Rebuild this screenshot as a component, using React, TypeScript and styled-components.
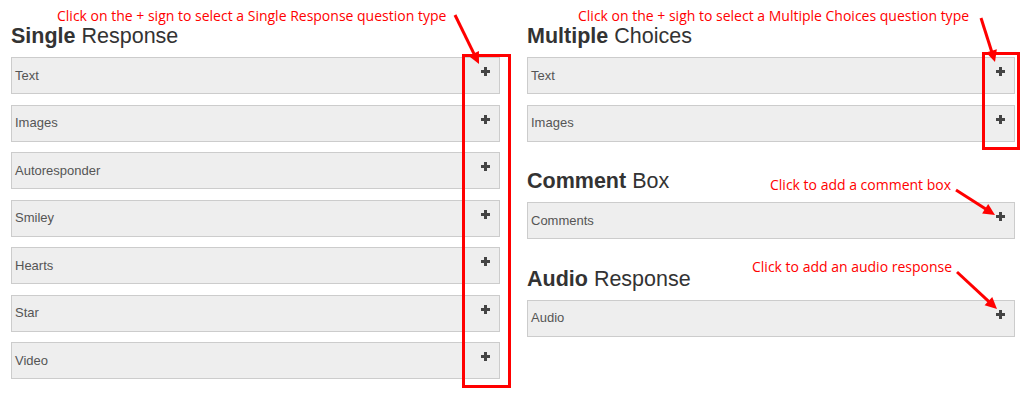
import styled, { createGlobalStyle } from 'styled-components';

const GlobalStyle = createGlobalStyle`
  html, body {
    margin: 0;
    padding: 0;
    background: #fff;
  }
`;

const Page = styled.div`
  position: relative;
  width: 1027px;
  height: 395px;
  overflow: hidden;
  display: grid;
  grid-template-columns: 489px 488px;
  column-gap: 27px;
  padding: 24px 0 0 11px;
  box-sizing: border-box;
  font-family: 'Liberation Sans', Arial, sans-serif;
`;

const Column = styled.div`
  display: flex;
  flex-direction: column;
  gap: 27.5px;
`;

const Section = styled.section`
  display: flex;
  flex-direction: column;
`;

const Heading = styled.h2`
  margin: 0 0 9px;
  font-size: 21.5px;
  line-height: 24px;
  font-weight: 400;
  color: #333;

  b {
    font-weight: 700;
  }
`;

const List = styled.ul`
  list-style: none;
  margin: 0;
  padding: 0;
  display: flex;
  flex-direction: column;
  gap: 10.5px;
`;

const Row = styled.li`
  box-sizing: border-box;
  height: 37px;
  display: flex;
  align-items: center;
  justify-content: space-between;
  padding: 0 9px 1px 3px;
  background: #eee;
  border: 1px solid #ccc;
  font-size: 13px;
  color: #555;
`;

const PlusButton = styled.span`
  align-self: flex-start;
  margin-top: 9px;
  width: 9px;
  height: 9px;
  display: flex;
  color: #444;
`;

const Note = styled.div<{ $x: number; $y: number }>`
  position: absolute;
  left: ${(p) => p.$x}px;
  top: ${(p) => p.$y}px;
  font-family: 'Open Sans', 'DejaVu Sans', sans-serif;
  font-size: 14px;
  line-height: 16px;
  color: #f00;
  white-space: nowrap;
`;

const Highlight = styled.div<{ $x: number; $y: number; $w: number; $h: number }>`
  position: absolute;
  left: ${(p) => p.$x}px;
  top: ${(p) => p.$y}px;
  width: ${(p) => p.$w}px;
  height: ${(p) => p.$h}px;
  box-sizing: border-box;
  border: 3px solid #f00;
`;

const ArrowLayer = styled.svg`
  position: absolute;
  left: 0;
  top: 0;
  pointer-events: none;
`;

function Plus() {
  return (
    <PlusButton>
      <svg width="9" height="9" viewBox="0 0 9 9">
        <path d="M3 0h3v3h3v3H6v3H3V6H0V3h3z" fill="currentColor" />
      </svg>
    </PlusButton>
  );
}

const sections = {
  left: [{ bold: 'Single', rest: 'Response', items: ['Text', 'Images', 'Autoresponder', 'Smiley', 'Hearts', 'Star', 'Video'] }],
  right: [
    { bold: 'Multiple', rest: 'Choices', items: ['Text', 'Images'] },
    { bold: 'Comment', rest: 'Box', items: ['Comments'] },
    { bold: 'Audio', rest: 'Response', items: ['Audio'] },
  ],
};

const arrows = [
  [455, 15, 479, 64],
  [981, 18, 995, 62],
  [956, 190, 995, 215],
  [957, 272, 997, 309],
];

function Arrow({ line }: { line: number[] }) {
  const [x1, y1, x2, y2] = line;
  const a = Math.atan2(y2 - y1, x2 - x1);
  const len = 13;
  const spread = 0.45;
  const p1 = [x2 - len * Math.cos(a - spread), y2 - len * Math.sin(a - spread)];
  const p2 = [x2 - len * Math.cos(a + spread), y2 - len * Math.sin(a + spread)];
  const bx = x2 - (len - 2) * Math.cos(a);
  const by = y2 - (len - 2) * Math.sin(a);
  return (
    <g>
      <line x1={x1} y1={y1} x2={bx} y2={by} stroke="#f00" strokeWidth={3} />
      <polygon points={`${x2},${y2} ${p1[0]},${p1[1]} ${p2[0]},${p2[1]}`} fill="#f00" />
    </g>
  );
}

function QuestionColumn({ list }: { list: typeof sections.left }) {
  return (
    <Column>
      {list.map((s) => (
        <Section key={s.bold}>
          <Heading>
            <b>{s.bold}</b> {s.rest}
          </Heading>
          <List>
            {s.items.map((item) => (
              <Row key={item}>
                {item}
                <Plus />
              </Row>
            ))}
          </List>
        </Section>
      ))}
    </Column>
  );
}

export default function App() {
  return (
    <>
      <GlobalStyle />
      <Page>
        <QuestionColumn list={sections.left} />
        <QuestionColumn list={sections.right} />

        <Note $x={57} $y={8}>Click on the + sign to select a Single Response question type</Note>
        <Note $x={578} $y={8}>Click on the + sigh to select a Multiple Choices question type</Note>
        <Note $x={770} $y={177}>Click to add a comment box</Note>
        <Note $x={752} $y={259}>Click to add an audio response</Note>

        <Highlight $x={462} $y={54} $w={49} $h={334} />
        <Highlight $x={982} $y={52} $w={38} $h={98} />

        <ArrowLayer width={1027} height={395}>
          {arrows.map((l, i) => (
            <Arrow key={i} line={l} />
          ))}
        </ArrowLayer>
      </Page>
    </>
  );
}
